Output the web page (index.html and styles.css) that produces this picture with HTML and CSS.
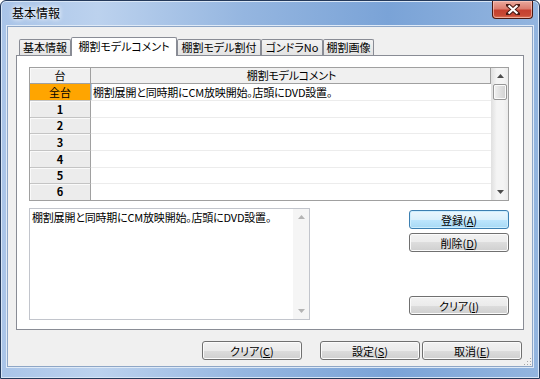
FILE: index.html
```html
<!DOCTYPE html>
<html lang="ja">
<head>
    <meta charset="UTF-8">
    <title>基本情報</title>
    <link rel="stylesheet" href="styles.css">
</head>
<body>
    <div class="window">
        <div class="titlebar">
            <span class="title">基本情報</span>
            <div class="close-btn">
                <svg width="14" height="11" viewBox="0 0 14 11">
                    <path d="M2 1 L12 10 M12 1 L2 10" stroke="#4a1a14" stroke-width="4.2" stroke-linecap="square"/>
                    <path d="M2.5 1.5 L11.5 9.5 M11.5 1.5 L2.5 9.5" stroke="#fff" stroke-width="2.2"/>
                </svg>
            </div>
        </div>
        <div class="client">
            <div class="tabs">
                <div class="tab t1">基本情報</div>
                <div class="tab t2 active">棚割モデルコメント</div>
                <div class="tab t3">棚割モデル割付</div>
                <div class="tab t4">ゴンドラNo</div>
                <div class="tab t5">棚割画像</div>
            </div>
            <div class="tab-panel">
                <div class="grid">
                    <div class="grid-body">
                        <div class="grid-row header">
                            <div class="row-head">台</div>
                            <div class="cell">棚割モデルコメント</div>
                        </div>
                        <div class="grid-row selected">
                            <div class="row-head">全台</div>
                            <div class="cell">棚割展開と同時期にCM放映開始。店頭にDVD設置。</div>
                        </div>
                        <div class="grid-row"><div class="row-head">1</div><div class="cell"></div></div>
                        <div class="grid-row short"><div class="row-head">2</div><div class="cell"></div></div>
                        <div class="grid-row"><div class="row-head">3</div><div class="cell"></div></div>
                        <div class="grid-row"><div class="row-head">4</div><div class="cell"></div></div>
                        <div class="grid-row short"><div class="row-head">5</div><div class="cell"></div></div>
                        <div class="grid-row short last"><div class="row-head">6</div><div class="cell"></div></div>
                    </div>
                    <div class="vscroll">
                        <div class="arrow">
                            <svg width="7" height="4" viewBox="0 0 7 4"><path d="M0 4 L3.5 0 L7 4 Z" fill="#4d4d4d"/></svg>
                        </div>
                        <div class="thumb"></div>
                        <div class="track"></div>
                        <div class="arrow">
                            <svg width="7" height="4" viewBox="0 0 7 4"><path d="M0 0 L3.5 4 L7 0 Z" fill="#4d4d4d"/></svg>
                        </div>
                    </div>
                </div>
                <div class="editor-row">
                    <div class="memo">
                        <div class="memo-text">棚割展開と同時期にCM放映開始。店頭にDVD設置。</div>
                        <div class="vscroll disabled">
                            <div class="arrow">
                                <svg width="7" height="4" viewBox="0 0 7 4"><path d="M0 4 L3.5 0 L7 4 Z" fill="#b4b4b4"/></svg>
                            </div>
                            <div class="track"></div>
                            <div class="arrow">
                                <svg width="7" height="4" viewBox="0 0 7 4"><path d="M0 0 L3.5 4 L7 0 Z" fill="#b4b4b4"/></svg>
                            </div>
                        </div>
                    </div>
                    <div class="side-buttons">
                        <button class="btn default">登録(<u>A</u>)</button>
                        <button class="btn">削除(<u>D</u>)</button>
                        <button class="btn bottom">クリア(<u>I</u>)</button>
                    </div>
                </div>
            </div>
            <div class="footer">
                <button class="btn">クリア(<u>C</u>)</button>
                <button class="btn wide-gap">設定(<u>S</u>)</button>
                <button class="btn">取消(<u>E</u>)</button>
            </div>
        </div>
    </div>
</body>
</html>
```

FILE: styles.css
```css
* {
    box-sizing: border-box;
}
body {
    margin: 0;
    font-family: "Noto Sans CJK JP", "Noto Sans", sans-serif;
    font-size: 11px;
    font-feature-settings: "palt";
    color: #000;
    background-color: #fff;
}
.window {
    width: 540px;
    height: 379px;
    border: 1px solid #24395a;
    border-radius: 6px 6px 0 0;
    padding: 0 6px 11px;
    display: flex;
    flex-direction: column;
    background: linear-gradient(90deg, #a9c4e8 0%, #bcd2ee 18%, #95b6e0 45%, #7aa3d7 72%, #93b5df 100%);
    box-shadow: inset 0 0 0 1px #d8e6f6;
}
.titlebar {
    height: 25px;
    display: flex;
    justify-content: space-between;
    align-items: flex-start;
    padding-left: 5px;
}
.title {
    font-size: 12px;
    line-height: 24px;
    text-shadow: 0 0 4px #fff, 0 0 6px #fff;
}
.close-btn {
    width: 41px;
    height: 18px;
    border: 1px solid #4c1810;
    border-top: none;
    border-radius: 0 0 4px 4px;
    background: linear-gradient(#e9a99d 0%, #dc7d6f 45%, #c5402f 55%, #c84a35 85%, #e07a5c 100%);
    box-shadow: inset 0 0 0 1px rgba(255, 210, 200, 0.6);
    display: flex;
    align-items: center;
    justify-content: center;
}
.client {
    flex: 1;
    position: relative;
    border: 1px solid #8ea6c6;
    background-color: #f0f0f0;
    padding: 10px 8px 0;
    display: flex;
    flex-direction: column;
    box-shadow: 0 0 0 1px #dfeaf7;
}
.client::after {
    content: "";
    position: absolute;
    right: 1px;
    bottom: 1px;
    width: 8px;
    height: 8px;
    background: radial-gradient(circle, #a7a7a7 0.8px, transparent 1px) 0 0 / 3px 3px;
    clip-path: polygon(100% 0, 100% 100%, 0 100%);
}
.tabs {
    height: 18px;
    display: flex;
    align-items: flex-end;
    padding-left: 3px;
}
.tab {
    height: 16px;
    border: 1px solid #898c95;
    border-bottom: none;
    border-radius: 2px 2px 0 0;
    background: linear-gradient(#f3f3f3, #e3e3e3);
    text-align: center;
    line-height: 15px;
    white-space: nowrap;
}
.tab.active {
    height: 19px;
    margin-bottom: -1px;
    background: #fff;
    line-height: 17px;
    position: relative;
    z-index: 1;
}
.t1 { width: 52px; }
.t2 { width: 106px; }
.t3 { width: 84px; }
.t4 { width: 62px; }
.t5 { width: 51px; }
.tab-panel {
    height: 275px;
    border: 1px solid #898c95;
    background-color: #fff;
    padding: 11px 14px 9px 12px;
    display: flex;
    flex-direction: column;
    gap: 7px;
}
.grid {
    height: 134px;
    border: 1px solid #a0a0a0;
    display: flex;
}
.grid-body {
    flex: 1;
    overflow: hidden;
}
.grid-row {
    display: flex;
    height: 17px;
    line-height: 16px;
}
.grid-row.short {
    height: 16px;
    line-height: 15px;
}
.row-head {
    width: 61px;
    border-right: 1px solid #a0a0a0;
    border-bottom: 1px solid #c4c4c4;
    background-color: #ececec;
    box-shadow: inset 1px 1px 0 #fafafa;
    text-align: center;
    font-weight: bold;
}
.cell {
    flex: 1;
    border-bottom: 1px solid #ececec;
    padding-left: 2px;
    white-space: nowrap;
    letter-spacing: -0.2px;
}
.grid-row.last .row-head,
.grid-row.last .cell {
    border-bottom: none;
}
.grid-row.header {
    height: 16px;
    line-height: 15px;
}
.grid-row.header .row-head,
.grid-row.header .cell {
    background-color: #f0f0f0;
    border-bottom: 1px solid #a0a0a0;
    font-weight: normal;
    text-align: center;
}
.grid-row.header .cell {
    border-right: 1px solid #a0a0a0;
}
.grid-row.selected .row-head {
    background-color: #ffa500;
    box-shadow: none;
    font-weight: normal;
}
.grid-row.selected .cell {
    box-shadow: inset 1px 0 0 #a9cbee;
}
.vscroll {
    width: 17px;
    display: flex;
    flex-direction: column;
    background: linear-gradient(90deg, #e3e3e3, #f4f4f4 30%, #f4f4f4 70%, #ebebeb);
    border-left: 1px solid #e2e2e2;
}
.vscroll .arrow {
    height: 16px;
    display: flex;
    align-items: center;
    justify-content: center;
}
.vscroll .thumb {
    height: 16px;
    margin: 0 1px;
    border: 1px solid #969696;
    border-radius: 2px;
    background: linear-gradient(90deg, #f1f1f1, #e0e0e0 50%, #d2d2d2);
    box-shadow: inset 0 0 0 1px #fafafa;
}
.vscroll .track {
    flex: 1;
}
.editor-row {
    height: 112px;
    display: flex;
    justify-content: space-between;
}
.memo {
    width: 281px;
    border: 1px solid #c2c5cc;
    display: flex;
}
.memo-text {
    flex: 1;
    padding: 1px 2px;
    line-height: 14px;
    letter-spacing: -0.2px;
    white-space: nowrap;
}
.vscroll.disabled {
    width: 16px;
    border-left: none;
    background: #f5f5f5;
}
.side-buttons {
    width: 100px;
    display: flex;
    flex-direction: column;
    gap: 4px;
    padding: 2px 0 5px;
}
.btn {
    width: 100px;
    height: 19px;
    padding: 0;
    border: 1px solid #707070;
    border-radius: 3px;
    background: linear-gradient(#f2f2f2 0%, #ebebeb 50%, #dddddd 50%, #cfcfcf 100%);
    box-shadow: inset 0 0 0 1px #fbfbfb;
    font-family: inherit;
    font-size: 11px;
    font-feature-settings: "palt";
    line-height: 16px;
    color: #000;
}
.btn u {
    text-underline-offset: 1px;
}
.btn.default {
    border-color: #3c7fb1;
    background: linear-gradient(#eaf6fd 0%, #d9f0fc 50%, #bee6fd 50%, #a7d9f5 100%);
    box-shadow: inset 0 0 0 1px #cdeefe;
}
.btn.bottom {
    margin-top: auto;
}
.footer {
    display: flex;
    justify-content: flex-end;
    gap: 2px;
    margin-top: 11px;
    padding-right: 2px;
}
.footer .wide-gap {
    margin-left: 16px;
}
```
